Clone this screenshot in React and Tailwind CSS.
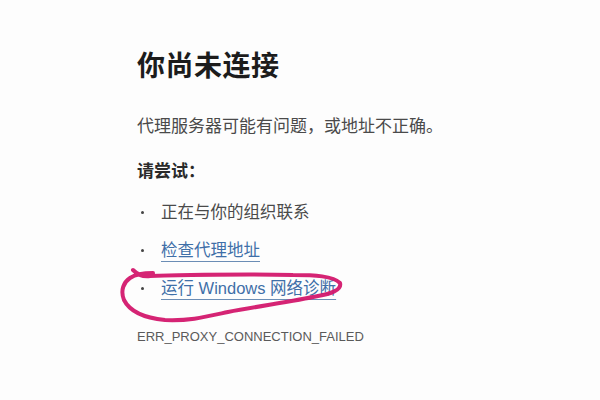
import React from "react";

const cjk = "font-['Segoe_UI','Liberation_Sans','Noto_Sans_CJK_SC',sans-serif]";

const items = [
  { text: "正在与你的组织联系", link: false },
  { text: "检查代理地址", link: true },
  { text: "运行 Windows 网络诊断", link: true },
];

export default function App() {
  return (
    <div className={`relative w-[600px] h-[400px] bg-[#fdfdfd] overflow-hidden ${cjk}`}>
      <div className="flex flex-col pl-[137px] pt-[50px]">
        <h1 className="text-[28px] leading-[34px] font-bold text-[#1c1c1c] tracking-[0.5px]">你尚未连接</h1>

        <p className="mt-[31px] text-[17px] leading-[24px] text-[#4a4a4a]">
          代理服务器可能有问题，或地址不正确。
        </p>

        <h2 className="mt-[21px] text-[17px] leading-[24px] font-bold text-[#2a2a2a]">请尝试：</h2>

        <ul className="mt-[16px] flex flex-col gap-[14px]">
          {items.map((it, i) => (
            <li key={i} className="flex items-center h-[24px]">
              <span className="ml-[4px] w-[3px] h-[3px] rounded-full bg-[#444]" />
              <span
                className={`ml-[17px] text-[16.5px] leading-[24px] ${
                  it.link
                    ? "text-[#3f6fa8] underline decoration-[#6b8db5] underline-offset-[5px]"
                    : "text-[#4a4a4a]"
                }`}
              >
                {it.text}
              </span>
            </li>
          ))}
        </ul>

        <div className="mt-[27px] text-[13px] leading-[20px] text-[#5a5a5a] font-['Liberation_Sans',sans-serif]">
          ERR_PROXY_CONNECTION_FAILED
        </div>
      </div>

      {/* hand-drawn marker annotation */}
      <svg className="absolute left-0 top-0 pointer-events-none" width="600" height="400" viewBox="0 0 600 400">
        <path
          d="M133 270 C138 275 143 277 150 276 C190 275 250 274 293 275 C315 275 333 276 340 283 C342 290 330 294 318 296 C295 301 260 306 228 312 C205 317 190 321 165 320 C145 318 130 312 124 300 C120 290 124 282 130 278 C136 274 145 273 153 273"
          fill="none"
          stroke="#d3186d"
          strokeWidth="4"
          strokeLinecap="round"
          strokeLinejoin="round"
          opacity="0.95"
        />
      </svg>
    </div>
  );
}
